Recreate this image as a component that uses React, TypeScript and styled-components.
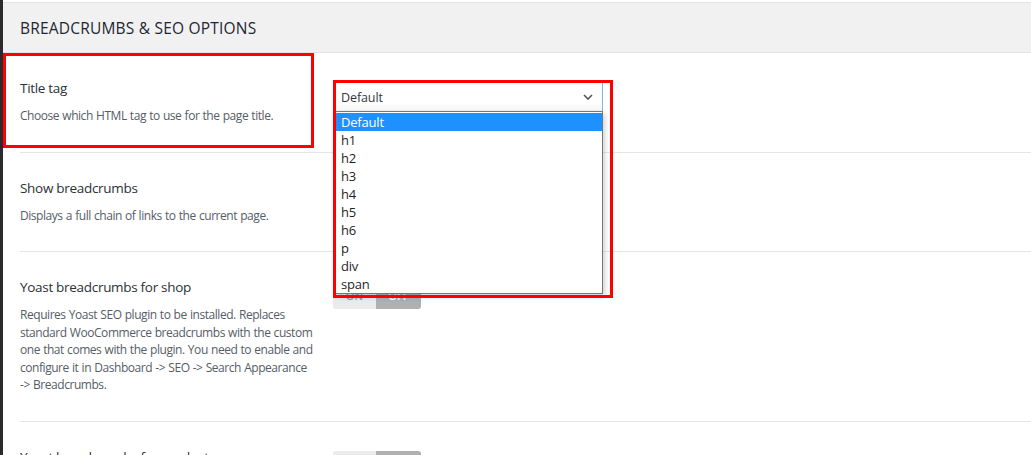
import React from 'react';
import styled, { createGlobalStyle } from 'styled-components';

const GlobalStyle = createGlobalStyle`
  html, body {
    margin: 0;
    padding: 0;
    background: #ffffff;
  }
  body {
    font-family: "Open Sans", "Noto Sans", sans-serif;
    overflow: hidden;
  }
`;

const Page = styled.div`
  height: 455px;
  overflow: hidden;
  border-left: 3px solid #2b2b2b;
  padding-top: 2px;
  box-sizing: border-box;
  background: #fff;
`;

const SectionHeader = styled.div`
  height: 49px;
  display: flex;
  align-items: center;
  padding: 0 17px;
  background: #f1f1f1;
  border-top: 1px solid #e3e3e3;
  border-bottom: 1px solid #e3e3e3;
`;

const SectionTitle = styled.h2`
  margin: 0;
  font-size: 15.5px;
  font-weight: 500;
  letter-spacing: 0.2px;
  text-transform: uppercase;
  color: #1d2632;
`;

const Row = styled.div`
  position: relative;
  display: grid;
  grid-template-columns: 293px 1fr;
  column-gap: 20px;
  margin-left: 17px;
  padding: 25px 0 27px;
  border-bottom: 1px solid #e5e5e5;
`;

const LabelCol = styled.div`
  display: flex;
  flex-direction: column;
`;

const Title = styled.div`
  font-size: 13.5px;
  font-weight: 400;
  letter-spacing: -0.3px;
  line-height: 20px;
  color: #2c3135;
  margin-bottom: 9px;
`;

const Desc = styled.div`
  font-size: 12px;
  letter-spacing: -0.45px;
  word-spacing: 0.5px;
  line-height: 17.5px;
  color: #555d66;
`;

const ControlCol = styled.div`
  margin-top: 4px;
`;

const Highlight = styled.div<{ $left: number; $top: number; $width: number; $height: number }>`
  position: absolute;
  left: ${p => p.$left}px;
  top: ${p => p.$top}px;
  width: ${p => p.$width}px;
  height: ${p => p.$height}px;
  border: 3px solid #ff0000;
  box-sizing: border-box;
  pointer-events: none;
  z-index: 5;
`;

const SelectWrap = styled.div`
  position: relative;
  width: 269px;
  margin-left: 1px;
  z-index: 4;
`;

const SelectBox = styled.div`
  height: 30px;
  box-sizing: border-box;
  display: flex;
  align-items: center;
  justify-content: space-between;
  padding: 0 9px 0 6px;
  background: linear-gradient(#ffffff 70%, #f4f4f4);
  border: 1px solid #8c8f94;
  border-right-color: #7fb2e5;
  font-size: 12.5px;
  letter-spacing: -0.1px;
  color: #32373c;
`;

const DropList = styled.ul`
  position: absolute;
  top: 29px;
  left: 0;
  width: 269px;
  box-sizing: border-box;
  margin: 0;
  padding: 1px 0 0;
  list-style: none;
  background: #fff;
  border: 1px solid #767676;
  box-shadow: 2px 3px 5px rgba(0, 0, 0, 0.18);
`;

const DropItem = styled.li<{ $active?: boolean }>`
  height: 18px;
  line-height: 18px;
  padding-left: 6px;
  font-size: 13px;
  letter-spacing: -0.2px;
  color: ${p => (p.$active ? '#ffffff' : '#1f1f1f')};
  background: ${p => (p.$active ? '#1e90ff' : 'transparent')};
`;

const Toggle = styled.div`
  display: flex;
  width: 88px;
  height: 28px;
  border-radius: 3px;
  overflow: hidden;
`;

const ToggleSide = styled.span<{ $off?: boolean }>`
  flex: ${p => (p.$off ? '0 0 45px' : '1')};
  display: flex;
  align-items: center;
  justify-content: center;
  font-size: 11px;
  font-weight: 600;
  background: ${p => (p.$off ? '#b0b0b0' : '#ebebeb')};
  color: ${p => (p.$off ? '#ffffff' : '#9a9a9a')};
`;

const Chevron = () => (
  <svg width="10" height="6" viewBox="0 0 10 6" fill="none">
    <path d="M1 1l4 4 4-4" stroke="#50575e" strokeWidth="1.6" />
  </svg>
);

const options = ['Default', 'h1', 'h2', 'h3', 'h4', 'h5', 'h6', 'p', 'div', 'span'];

const OnOff = () => (
  <Toggle>
    <ToggleSide>ON</ToggleSide>
    <ToggleSide $off>OFF</ToggleSide>
  </Toggle>
);

export default function App() {
  return (
    <>
      <GlobalStyle />
      <Page>
        <SectionHeader>
          <SectionTitle>Breadcrumbs &amp; SEO options</SectionTitle>
        </SectionHeader>

        <Row>
          <Highlight $left={-17} $top={0} $width={311} $height={95} />
          <LabelCol>
            <Title>Title tag</Title>
            <Desc>Choose which HTML tag to use for the page title.</Desc>
          </LabelCol>
          <ControlCol>
            <SelectWrap>
              <Highlight $left={-1} $top={-2} $width={280} $height={218} />
              <SelectBox>
                <span>Default</span>
                <Chevron />
              </SelectBox>
              <DropList>
                {options.map((o, i) => (
                  <DropItem key={o} $active={i === 0}>{o}</DropItem>
                ))}
              </DropList>
            </SelectWrap>
          </ControlCol>
        </Row>

        <Row>
          <LabelCol>
            <Title>Show breadcrumbs</Title>
            <Desc>Displays a full chain of links to the current page.</Desc>
          </LabelCol>
          <ControlCol>
            <OnOff />
          </ControlCol>
        </Row>

        <Row>
          <LabelCol>
            <Title>Yoast breadcrumbs for shop</Title>
            <Desc>
              Requires Yoast SEO plugin to be installed. Replaces standard WooCommerce breadcrumbs
              with the custom one that comes with the plugin. You need to enable and configure it in
              Dashboard -&gt; SEO -&gt; Search Appearance -&gt; Breadcrumbs.
            </Desc>
          </LabelCol>
          <ControlCol>
            <OnOff />
          </ControlCol>
        </Row>

        <Row>
          <LabelCol>
            <Title>Yoast breadcrumbs for product</Title>
            <Desc>Uses Yoast SEO breadcrumbs on single product pages.</Desc>
          </LabelCol>
          <ControlCol>
            <OnOff />
          </ControlCol>
        </Row>
      </Page>
    </>
  );
}
